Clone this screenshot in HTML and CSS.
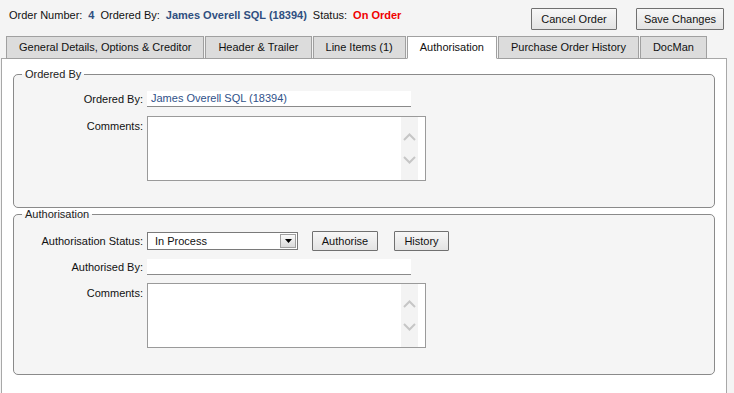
FILE: index.html
```html
<!DOCTYPE html>
<html>
<head>
<meta charset="utf-8">
<title>Purchase Order - Authorisation</title>
<link rel="stylesheet" href="styles.css">
</head>
<body>
<div class="header">
  <div class="info">
    <span class="lbl">Order Number:</span>
    <span class="val">4</span>
    <span class="lbl">Ordered By:</span>
    <span class="val">James Overell SQL (18394)</span>
    <span class="lbl">Status:</span>
    <span class="status">On Order</span>
  </div>
  <div class="actions">
    <button class="btn cancel">Cancel Order</button>
    <button class="btn save">Save Changes</button>
  </div>
</div>

<div class="tabs">
  <div class="tab">General Details, Options &amp; Creditor</div>
  <div class="tab">Header &amp; Trailer</div>
  <div class="tab">Line Items (1)</div>
  <div class="tab active">Authorisation</div>
  <div class="tab">Purchase Order History</div>
  <div class="tab">DocMan</div>
</div>

<div class="panel">
  <fieldset class="group">
    <legend>Ordered By</legend>
    <div class="form">
      <div class="flabel">Ordered By:</div>
      <div class="field linked">James Overell SQL (18394)</div>
      <div class="flabel top">Comments:</div>
      <div class="memo">
        <div class="memo-text"></div>
        <div class="scroll">
          <svg width="17" height="63" viewBox="0 0 17 63">
            <polyline points="3,23 8.5,17.5 14,23" fill="none" stroke="#c6c6c6" stroke-width="2"/>
            <polyline points="3,40 8.5,45.5 14,40" fill="none" stroke="#c6c6c6" stroke-width="2"/>
          </svg>
        </div>
      </div>
    </div>
  </fieldset>

  <fieldset class="group">
    <legend>Authorisation</legend>
    <div class="form auth-form">
      <div class="flabel">Authorisation Status:</div>
      <div class="rowctl">
        <div class="select">
          <span class="select-text">In Process</span>
          <span class="select-btn">
            <svg width="7" height="4" viewBox="0 0 7 4"><polygon points="0,0 7,0 3.5,4" fill="#000"/></svg>
          </span>
        </div>
        <button class="btn small auth">Authorise</button>
        <button class="btn small hist">History</button>
      </div>
      <div class="flabel">Authorised By:</div>
      <div class="field"></div>
      <div class="flabel top">Comments:</div>
      <div class="memo">
        <div class="memo-text"></div>
        <div class="scroll">
          <svg width="17" height="63" viewBox="0 0 17 63">
            <polyline points="3,23 8.5,17.5 14,23" fill="none" stroke="#c6c6c6" stroke-width="2"/>
            <polyline points="3,40 8.5,45.5 14,40" fill="none" stroke="#c6c6c6" stroke-width="2"/>
          </svg>
        </div>
      </div>
    </div>
  </fieldset>
</div>
</body>
</html>
```

FILE: styles.css
```css
html, body {
  margin: 0;
  padding: 0;
}
body {
  background: #f4f4f4;
  font-family: "Liberation Sans", Arial, sans-serif;
  font-size: 11px;
  line-height: 13px;
  color: #111;
  width: 734px;
  height: 393px;
  overflow: hidden;
}

.header {
  display: flex;
  justify-content: space-between;
  align-items: flex-start;
  height: 36px;
}
.info {
  display: flex;
  gap: 6px;
  margin: 9px 0 0 9px;
  white-space: nowrap;
}
.val {
  font-weight: bold;
  color: #2f4f80;
}
.status {
  font-weight: bold;
  color: #f00000;
}
.actions {
  display: flex;
  gap: 19px;
  margin: 8px 10px 0 0;
}
.btn {
  font-family: "Liberation Sans", Arial, sans-serif;
  font-size: 11px;
  color: #111;
  height: 22px;
  padding: 0;
  border: 1px solid #707070;
  border-radius: 1px;
  background: linear-gradient(#f7f7f7, #e3e3e3);
}
.btn.cancel {
  width: 86px;
}
.btn.save {
  width: 88px;
}

.tabs {
  display: flex;
  gap: 1px;
  padding-left: 6px;
  position: relative;
  z-index: 1;
  margin-bottom: -1px;
}
.tab {
  height: 21px;
  line-height: 20px;
  padding: 0 12px;
  border: 1px solid #a0a0a0;
  background: #dcdcdc;
  color: #111;
  white-space: nowrap;
}
.tab.active {
  background: #fff;
  border-bottom-color: #fff;
}

.panel {
  margin-left: 1px;
  width: 726px;
  height: 337px;
  border: 1px solid #a8a8a8;
  background: #fff;
  padding-top: 9px;
  box-sizing: border-box;
}

.group {
  margin: 0 11px;
  padding: 10px 0 26px 0;
  border: 1px solid #8a8a8a;
  border-radius: 5px;
  background: #f5f5f5;
  min-width: 0;
}
.group legend {
  margin-left: 8px;
  padding: 0 3px;
  line-height: 13px;
  color: #222;
}

.form {
  display: grid;
  grid-template-columns: 129px auto;
  column-gap: 4px;
  row-gap: 9px;
  align-items: center;
}
.auth-form {
  row-gap: 8px;
}
.flabel {
  text-align: right;
  color: #111;
  white-space: nowrap;
}
.flabel.top {
  align-self: start;
  padding-top: 4px;
}

.field {
  width: 264px;
  height: 16px;
  box-sizing: border-box;
  background: #fff;
  border-bottom: 1px solid #8a8a8a;
  padding-left: 4px;
  line-height: 15px;
}
.field.linked {
  color: #2f5189;
}

.memo {
  width: 279px;
  height: 65px;
  box-sizing: border-box;
  border: 1px solid #9a9a9a;
  background: #fff;
  display: flex;
}
.memo-text {
  flex: 1;
}
.scroll {
  width: 17px;
  margin-right: 7px;
  background: #f3f3f3;
}
.scroll svg {
  display: block;
}

.rowctl {
  display: flex;
  align-items: center;
  height: 20px;
}
.select {
  width: 151px;
  height: 18px;
  box-sizing: border-box;
  border: 1px solid #7a7a7a;
  background: #fff;
  display: flex;
  align-items: center;
  justify-content: space-between;
}
.select-text {
  padding-left: 7px;
  color: #111;
}
.select-btn {
  width: 16px;
  height: 14px;
  box-sizing: border-box;
  margin-right: 1px;
  border: 1px solid #a0a0a0;
  background: linear-gradient(#fafafa, #dadada);
  display: flex;
  align-items: center;
  justify-content: center;
}
.select-btn svg {
  display: block;
}
.btn.small {
  height: 20px;
  padding: 0;
}
.btn.auth {
  width: 66px;
  margin-left: 14px;
}
.btn.hist {
  width: 55px;
  margin-left: 16px;
}
```
